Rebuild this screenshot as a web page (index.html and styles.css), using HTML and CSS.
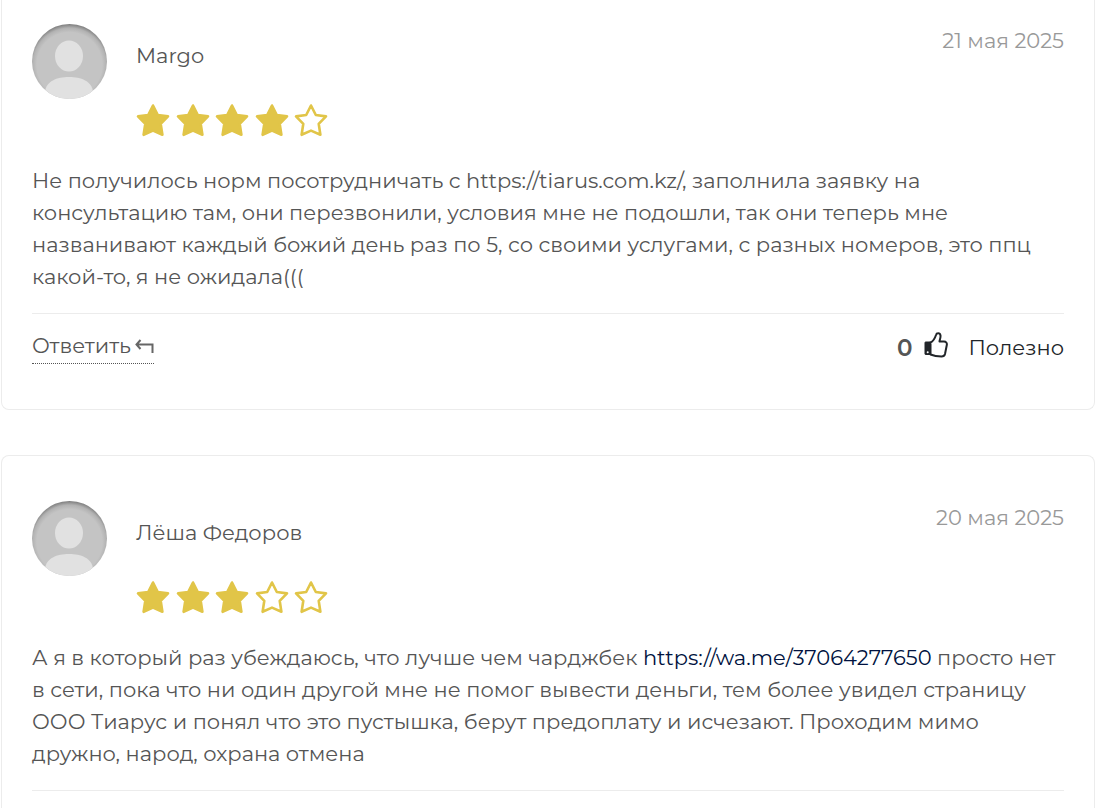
FILE: index.html
```html
<!DOCTYPE html>
<html lang="ru">
<head>
<meta charset="utf-8">
<meta name="viewport" content="width=device-width, initial-scale=1">
<title>Отзывы</title>
<link rel="stylesheet" href="styles.css">
</head>
<body>
<svg class="sprite" aria-hidden="true">
  <defs>
    <radialGradient id="disc" cx="37.5" cy="41" r="43" gradientUnits="userSpaceOnUse">
      <stop offset="0.76" stop-color="#c4c4c4"/>
      <stop offset="0.86" stop-color="#b2b2b2"/>
      <stop offset="0.96" stop-color="#787878"/>
    </radialGradient>
    <clipPath id="round"><circle cx="37.5" cy="37.5" r="37.5"/></clipPath>
    <symbol id="avatar" viewBox="0 0 75 75">
      <g clip-path="url(#round)">
        <rect width="75" height="75" fill="url(#disc)"/>
        <ellipse cx="37" cy="32" rx="14" ry="15.500" fill="#e1e1e1"/>
        <path d="M13 75V68C14 57 25 53 37 53S60 57 61 68V75Z" fill="#e1e1e1"/>
      </g>
    </symbol>
    <symbol id="star" viewBox="0 0 34 34">
      <path d="M17 2.500L21.800 12 32 13.400 24.700 20.800 26.400 31.800 17 27.600 7.600 31.800 9.300 20.800 2 13.400 12.200 12Z" stroke="#e1c548" stroke-width="2.600" stroke-linejoin="round"/>
    </symbol>
  </defs>
</svg>
<main class="reviews">
  <article class="card card-first">
    <header class="head">
      <svg class="avatar" aria-hidden="true"><use href="#avatar"/></svg>
      <div class="author">
        <h2 class="name">Margo</h2>
        <div class="stars" role="img" aria-label="4 из 5">
          <svg class="star full"><use href="#star"/></svg>
          <svg class="star full"><use href="#star"/></svg>
          <svg class="star full"><use href="#star"/></svg>
          <svg class="star full"><use href="#star"/></svg>
          <svg class="star"><use href="#star"/></svg>
        </div>
      </div>
      <time class="date" datetime="2025-05-21">21 мая 2025</time>
    </header>
    <p class="text">Не получилось норм посотрудничать с https://tiarus.com.kz/, заполнила заявку на консультацию там, они перезвонили, условия мне не подошли, так они теперь мне названивают каждый божий день раз по 5, со своими услугами, с разных номеров, это ппц какой-то, я не ожидала(((</p>
    <footer class="actions">
      <a class="reply" href="#reply">Ответить
        <svg class="reply-icon" viewBox="0 0 19 16" aria-hidden="true"><path d="M5.500 2L1.500 6.500 5.500 11M1.500 6.500H17.500V15"/></svg>
      </a>
      <div class="useful">
        <span class="count">0</span>
        <button class="like" type="button">
          <svg class="thumb" viewBox="0 0 24 26" aria-hidden="true">
            <path class="cuff" d="M1 10.500Q1 10 1.500 10H6.500V22.500H1.500Q1 22.500 1 22Z"/>
            <path class="hand" d="M6.500 10.500C10 9 11 6 12 3C12.500 .800 16 .500 16.500 3.500C16.800 6 15.500 8 15.500 9.500H20C22 9.500 23.200 11 22.800 13L21 22C20.500 24 19.500 24.500 17.500 24.500C13 24.500 10 24 6.500 22.500Z"/>
            <circle class="dot" cx="3.700" cy="20.300" r="1"/>
          </svg>
          Полезно
        </button>
      </div>
    </footer>
  </article>
  <article class="card card-last">
    <header class="head">
      <svg class="avatar" aria-hidden="true"><use href="#avatar"/></svg>
      <div class="author">
        <h2 class="name">Лёша Федоров</h2>
        <div class="stars" role="img" aria-label="3 из 5">
          <svg class="star full"><use href="#star"/></svg>
          <svg class="star full"><use href="#star"/></svg>
          <svg class="star full"><use href="#star"/></svg>
          <svg class="star"><use href="#star"/></svg>
          <svg class="star"><use href="#star"/></svg>
        </div>
      </div>
      <time class="date" datetime="2025-05-20">20 мая 2025</time>
    </header>
    <p class="text">А я в который раз убеждаюсь, что лучше чем чарджбек <a class="link" href="https://wa.me/37064277650">https://wa.me/37064277650</a> просто нет в сети, пока что ни один другой мне не помог вывести деньги, тем более увидел страницу ООО Тиарус и понял что это пустышка, берут предоплату и исчезают. Проходим мимо дружно, народ, охрана отмена</p>
  </article>
</main>
</body>
</html>
```
FILE: styles.css
```css
* {
  box-sizing: border-box;
}

body {
  margin: 0;
  background: #fff;
  color: #555;
  font-family: Montserrat, Inter, sans-serif;
  font-size: 21px;
  line-height: 32px;
}

.sprite {
  position: absolute;
  width: 0;
  height: 0;
}

.reviews {
  display: flex;
  flex-direction: column;
  gap: 45px;
  min-height: 100vh;
  padding: 0 9px 0 1px;
}

.card {
  padding: 45px 30px;
  border: 1px solid #ececec;
  border-radius: 8px;
}

.card-first {
  padding-top: 24px;
  border-top: 0;
  border-top-left-radius: 0;
  border-top-right-radius: 0;
}

.card-last {
  flex: 1;
  padding-bottom: 0;
  border-bottom: 0;
  border-bottom-left-radius: 0;
  border-bottom-right-radius: 0;
}

.head {
  display: flex;
  align-items: flex-start;
  gap: 29px;
}

.avatar {
  flex: none;
  width: 75px;
  height: 75px;
}

.author {
  flex: 1;
  padding-top: 16px;
}

.name {
  margin: 0;
  font-size: inherit;
  font-weight: 400;
}

.stars {
  display: flex;
  justify-content: space-between;
  width: 192px;
  margin-top: 31px;
}

.star {
  width: 34px;
  height: 34px;
  fill: none;
}

.full {
  fill: #e1c548;
}

.date {
  padding-top: 1px;
  color: #999;
}

.text {
  margin: 28px 0 0;
  padding-bottom: 20px;
  border-bottom: 1px solid #ececec;
}

.link {
  color: #001240;
  text-decoration: none;
}

.actions {
  display: flex;
  align-items: flex-start;
  justify-content: space-between;
  padding-top: 16px;
}

.reply {
  display: flex;
  align-items: center;
  gap: 4px;
  padding-bottom: 1px;
  border-bottom: 1px dotted #555;
  color: inherit;
  text-decoration: none;
}

.reply-icon {
  width: 19px;
  height: 16px;
  fill: none;
  stroke: #666;
  stroke-width: 2;
}

.useful {
  display: flex;
  align-items: center;
  gap: 12px;
  padding-top: 2px;
}

.count {
  font-size: 23px;
  font-weight: 600;
}

.like {
  display: flex;
  align-items: flex-start;
  gap: 20px;
  padding: 0;
  border: 0;
  background: none;
  color: #212529;
  font: inherit;
}

.thumb {
  width: 24px;
  height: 26px;
}

.cuff {
  fill: #212529;
  stroke: #212529;
}

.hand {
  fill: none;
  stroke: #212529;
  stroke-width: 2;
  stroke-linejoin: round;
}

.dot {
  fill: #fff;
}
```
